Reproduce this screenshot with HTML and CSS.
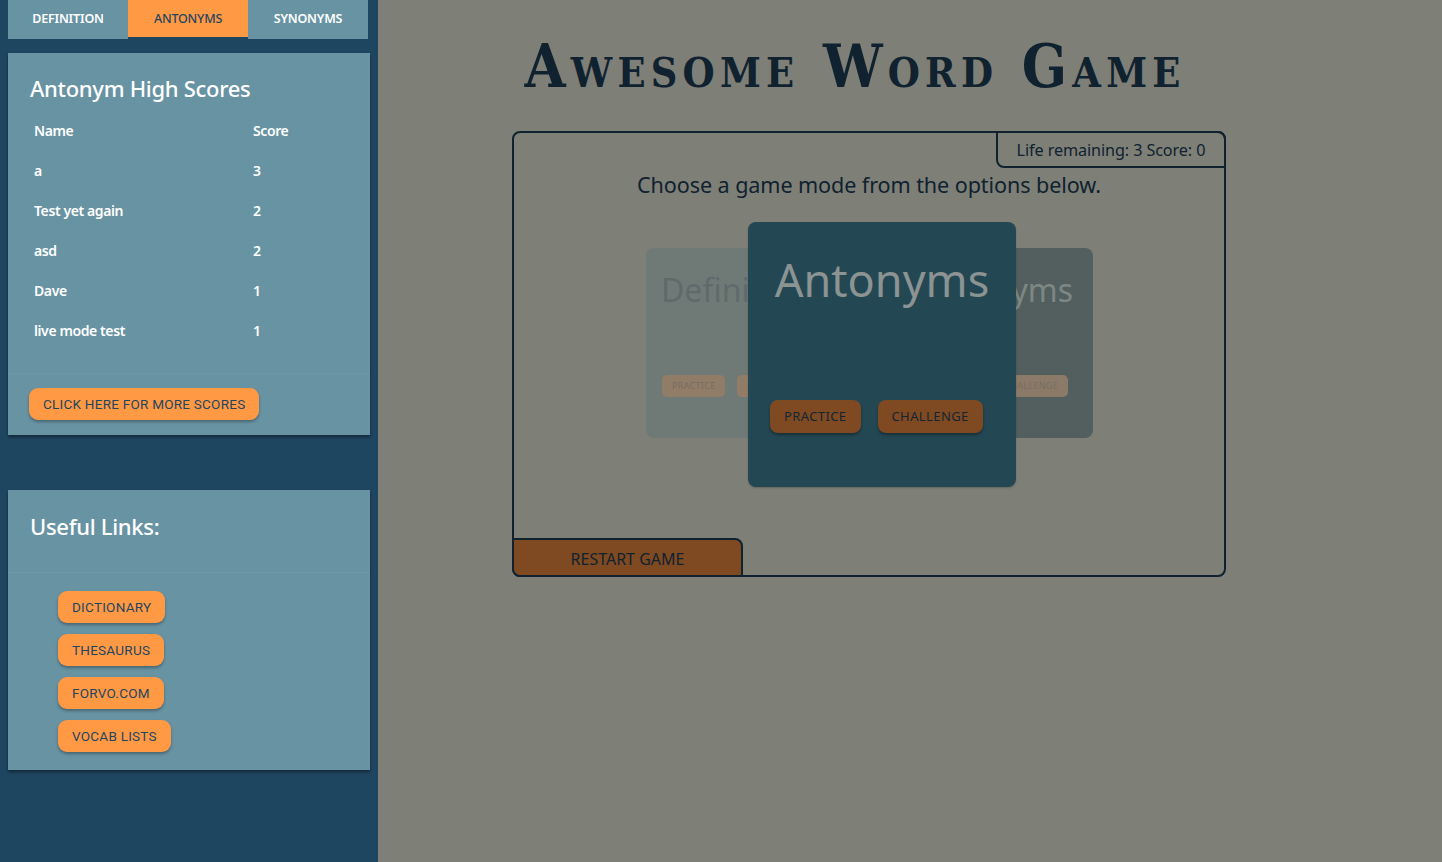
FILE: index.html
```html
<!DOCTYPE html>
<html lang="en">
<head>
<meta charset="utf-8">
<title>Awesome Word Game</title>
<link rel="stylesheet" href="styles.css">
</head>
<body>
<aside class="sidebar">
  <nav class="tabs">
    <a class="tab">DEFINITION</a>
    <a class="tab active">ANTONYMS</a>
    <a class="tab">SYNONYMS</a>
  </nav>
  <section class="card scores">
    <h2 class="card-title">Antonym High Scores</h2>
    <table class="score-table">
      <tr><th>Name</th><th>Score</th></tr>
      <tr><td>a</td><td>3</td></tr>
      <tr><td>Test yet again</td><td>2</td></tr>
      <tr><td>asd</td><td>2</td></tr>
      <tr><td>Dave</td><td>1</td></tr>
      <tr><td>live mode test</td><td>1</td></tr>
    </table>
    <div class="card-actions">
      <button class="btn">CLICK HERE FOR MORE SCORES</button>
    </div>
  </section>
  <section class="card links">
    <h2 class="card-title links-title">Useful Links:</h2>
    <div class="link-list">
      <button class="btn">DICTIONARY</button>
      <button class="btn">THESAURUS</button>
      <button class="btn">FORVO.COM</button>
      <button class="btn">VOCAB LISTS</button>
    </div>
  </section>
</aside>
<main class="main">
  <div class="wrap">
    <h1 class="title">Awesome Word Game</h1>
    <div class="game">
      <div class="status">Life remaining: 3 Score: 0</div>
      <p class="prompt">Choose a game mode from the options below.</p>
      <div class="stage">
        <div class="mode back left">
          <div class="mode-name">Definitions</div>
          <div class="mode-btns"><span class="sbtn">PRACTICE</span><span class="sbtn">CHALLENGE</span></div>
        </div>
        <div class="mode back right">
          <div class="mode-name right-name">Synonyms</div>
          <div class="mode-btns end"><span class="sbtn">PRACTICE</span><span class="sbtn">CHALLENGE</span></div>
        </div>
        <div class="mode front">
          <div class="front-name">Antonyms</div>
          <div class="front-btns"><span class="mbtn">PRACTICE</span><span class="mbtn">CHALLENGE</span></div>
        </div>
      </div>
      <button class="restart">RESTART GAME</button>
    </div>
  </div>
</main>
</body>
</html>
```

FILE: styles.css
```css
html, body {
  margin: 0;
  padding: 0;
  height: 100%;
}
body {
  display: flex;
  font-family: "Noto Sans", "Open Sans", sans-serif;
  background: #7e7f77;
  overflow: hidden;
}
.sidebar {
  width: 370px;
  flex: 0 0 370px;
  padding-left: 8px;
  background: #1f4661;
  min-height: 862px;
}
.tabs {
  display: flex;
  width: 360px;
  height: 39px;
}
.tab {
  flex: 1;
  display: flex;
  align-items: center;
  justify-content: center;
  padding-bottom: 2px;
  box-sizing: border-box;
  background: #6893a3;
  color: #fff;
  font-size: 12.5px;
  font-weight: 600;
  letter-spacing: -0.2px;
}
.tab.active {
  background: #ff9944;
  color: #1f4661;
  font-weight: 500;
  box-shadow: inset 0 -2px 0 #1f4661;
}
.card {
  width: 362px;
  background: #6893a3;
  box-shadow: 0 2px 3px rgba(0, 0, 0, 0.45);
  color: #fff;
}
.scores {
  margin-top: 14px;
}
.card-title {
  margin: 0;
  padding: 20px 22px 0;
  font-size: 22px;
  font-weight: 500;
  line-height: 30px;
  letter-spacing: -0.3px;
}
.score-table {
  margin: 7px 0 0 18px;
  border-collapse: collapse;
  font-size: 14px;
}
.score-table th, .score-table td {
  text-align: left;
  height: 40px;
  padding: 0 8px;
  font-weight: 600;
  letter-spacing: -0.4px;
}
.score-table th:first-child, .score-table td:first-child {
  width: 203px;
}
.card-actions {
  margin-top: 23px;
  border-top: 1px solid rgba(255, 255, 255, 0.05);
  padding: 14px 21px 15px;
}
.btn {
  display: inline-block;
  height: 32px;
  padding: 0 14px;
  border: none;
  border-radius: 9px;
  background: #ff9944;
  color: #1f4661;
  font-family: Roboto, "Liberation Sans", sans-serif;
  font-size: 13.5px;
  font-weight: 400;
  letter-spacing: 0.25px;
  box-shadow: 0 2px 3px rgba(0, 0, 0, 0.3);
}
.links {
  margin-top: 55px;
}
.links-title {
  padding-top: 21px;
  padding-bottom: 31px;
  border-bottom: 1px solid rgba(255, 255, 255, 0.05);
}
.link-list {
  display: flex;
  flex-direction: column;
  align-items: flex-start;
  gap: 11px;
  padding: 18px 0 18px 50px;
}
.main {
  flex: 1;
}
.wrap {
  width: 714px;
  margin-left: 134px;
}
.title {
  margin: 31px 28px 0 0;
  height: 100px;
  text-align: center;
  font-family: "DejaVu Serif Condensed", "DejaVu Serif", serif;
  font-variant: small-caps;
  font-weight: bold;
  font-size: 59px;
  line-height: 72px;
  letter-spacing: 5.2px;
  color: #10222f;
}
.game {
  box-sizing: border-box;
  height: 446px;
  border: 2px solid #10222f;
  border-radius: 8px;
  display: flex;
  flex-direction: column;
  color: #10222f;
}
.status {
  align-self: flex-end;
  margin: -2px -2px 0 0;
  box-sizing: border-box;
  height: 37px;
  width: 230px;
  border: 2px solid #10222f;
  border-top-right-radius: 8px;
  border-bottom-left-radius: 8px;
  font-size: 16.2px;
  line-height: 35px;
  text-align: center;
  letter-spacing: -0.1px;
}
.prompt {
  margin: 2px 0 0;
  text-align: center;
  font-size: 21.6px;
  line-height: 30px;
  letter-spacing: -0.1px;
}
.stage {
  position: relative;
  height: 290px;
  margin-top: 22px;
}
.mode {
  position: absolute;
  border-radius: 8px;
  box-sizing: border-box;
}
.back {
  top: 26px;
  width: 222px;
  height: 190px;
}
.left {
  left: 132px;
  background: #6f7a77;
}
.right {
  left: 357px;
  background: #525f5e;
}
.mode-name {
  font-size: 32px;
  padding: 22px 0 0 15px;
  line-height: 40px;
  color: #5f6b6b;
}
.right-name {
  color: #7d8784;
  text-align: right;
  padding: 22px 20px 0 0;
}
.mode-btns {
  display: flex;
  gap: 12px;
  padding: 65px 0 0 16px;
}
.mode-btns.end {
  justify-content: flex-end;
  padding: 65px 25px 0 0;
}
.sbtn {
  height: 22px;
  padding: 0 10px;
  border-radius: 5px;
  font-size: 9px;
  line-height: 22px;
  letter-spacing: 0.3px;
}
.left .sbtn {
  background: #917c67;
  color: #766c62;
}
.right .sbtn {
  background: #8b7a67;
  color: #786e64;
}
.front {
  top: 0;
  left: 234px;
  width: 268px;
  height: 265px;
  background: #244853;
  box-shadow: 0 1px 2px rgba(0, 0, 0, 0.2);
}
.front-name {
  text-align: center;
  font-size: 45px;
  line-height: 56px;
  padding-top: 30px;
  color: #8c9393;
}
.front-btns {
  display: flex;
  gap: 17px;
  padding: 92px 0 0 22px;
}
.mbtn {
  height: 33px;
  padding: 0 14px;
  background: #7f4a22;
  border-radius: 8px;
  color: #132532;
  font-size: 13px;
  line-height: 33px;
  letter-spacing: 0.4px;
  box-shadow: 0 2px 3px rgba(0, 0, 0, 0.35);
}
.restart {
  margin: auto 0 -2px -2px;
  align-self: flex-start;
  box-sizing: border-box;
  width: 231px;
  height: 39px;
  background: #7f4a22;
  border: 2px solid #10222f;
  border-top-right-radius: 8px;
  border-bottom-left-radius: 8px;
  border-top-left-radius: 0;
  border-bottom-right-radius: 0;
  color: #10222f;
  font-family: "Noto Sans", sans-serif;
  font-size: 16px;
  line-height: 33px;
  padding: 3px 0 0;
}
```
